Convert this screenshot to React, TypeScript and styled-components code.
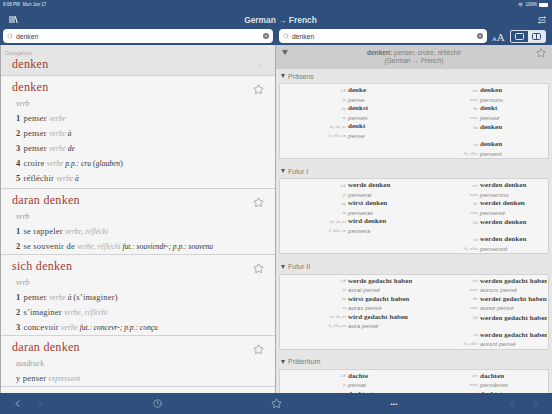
import React from 'react';
import styled, { createGlobalStyle } from 'styled-components';
import { ChevronLeft, ChevronRight, Clock, Search, Star, Wifi, X } from 'lucide-react';

const GlobalStyle = createGlobalStyle`
  html, body { margin: 0; padding: 0; background: #f5f5f5; }
  * { box-sizing: border-box; }
`;

const SERIF = '"Liberation Serif", "Times New Roman", serif';
const SANS = '"Liberation Sans", Arial, sans-serif';

const Page = styled.div`
  width: 552px;
  height: 414px;
  display: flex;
  flex-direction: column;
  overflow: hidden;
  font-family: ${SANS};
  will-change: opacity;
  opacity: 0.999;
`;

const Header = styled.header`
  height: 45px;
  flex: none;
  background: #2f507c;
  color: #fff;
  padding: 0 3px;
`;

const StatusBar = styled.div`
  height: 9px;
  padding: 0 1px 0 0;
  display: flex;
  justify-content: space-between;
  align-items: center;
  font-size: 4.5px;
  color: #e8edf3;
`;

const StatusLeft = styled.div`
  display: flex;
  gap: 3px;
`;

const StatusRight = styled.div`
  display: flex;
  align-items: center;
  gap: 2px;
`;

const Battery = styled.span`
  width: 9px;
  height: 4px;
  background: #fff;
  border-radius: 1px;
`;

const TitleRow = styled.div`
  height: 20px;
  padding: 1px 3px 0 6px;
  display: flex;
  align-items: center;
  justify-content: space-between;
`;

const Title = styled.div`
  font-size: 8.4px;
  font-weight: 700;
  color: #d8e0ea;
  margin-left: 5px;
`;

const SearchRow = styled.div`
  display: grid;
  grid-template-columns: 270px 1fr;
  gap: 6px;
`;

const SearchTools = styled.div`
  display: flex;
  align-items: center;
  gap: 5px;
`;

const SearchBox = styled.div<{ $width?: number }>`
  width: ${p => (p.$width ? `${p.$width}px` : '100%')};
  height: 14px;
  border-radius: 4px;
  background: #fff;
  padding: 0 4px 0 4px;
  display: flex;
  align-items: center;
  gap: 3px;
  font-size: 6.8px;
  color: #3c3c3c;
`;

const SearchText = styled.span`
  flex: 1;
`;

const ClearButton = styled.span`
  width: 6.5px;
  height: 6.5px;
  border-radius: 50%;
  background: #777;
  color: #fff;
  display: flex;
  align-items: center;
  justify-content: center;
`;

const FontSize = styled.div`
  font-family: ${SERIF};
  display: flex;
  align-items: baseline;
  color: #e4e9f0;
  margin-top: 1px;
`;

const FontLetter = styled.span<{ $big?: boolean }>`
  font-size: ${p => (p.$big ? 11 : 6.5)}px;
`;

const Segmented = styled.div`
  width: 36px;
  height: 13px;
  display: flex;
  border: 1px solid #d7e0ea;
  border-radius: 2px;
  overflow: hidden;
`;

const Segment = styled.span<{ $on?: boolean }>`
  flex: 1;
  display: flex;
  align-items: center;
  justify-content: center;
  background: ${p => (p.$on ? '#e4e9f0' : 'transparent')};
  color: ${p => (p.$on ? '#2f507c' : '#e4e9f0')};
`;

const Main = styled.main`
  flex: 1;
  min-height: 0;
  display: grid;
  grid-template-columns: 276px 276px;
  overflow: hidden;
`;

const LeftPane = styled.div`
  background: #f5f5f5;
  border-left: 1px solid #a9a9a9;
  border-right: 1px solid #a9a9a9;
  overflow: hidden;
`;

const ConjugationRow = styled.div`
  height: 31px;
  background: #e5e5e5;
  border-bottom: 1px solid #cfcfcf;
  padding: 6px 5px 0 4px;
  display: flex;
  justify-content: space-between;
`;

const ConjLabel = styled.div`
  font-size: 4.6px;
  color: #a9a9a9;
`;

const ConjWord = styled.div`
  font-family: ${SERIF};
  font-size: 12px;
  line-height: 14px;
  color: #a43a30;
  margin: 1px 0 0 7px;
  letter-spacing: 0.3px;
`;

const ConjChevron = styled.span`
  color: #b4b4b4;
  margin: 4.5px 6px 0 0;
`;

const Entry = styled.article<{ $height: number }>`
  height: ${p => p.$height}px;
  border-bottom: 1px solid #d2d2d2;
  padding: 4px 16px 0 11px;
  position: relative;
`;

const EntryStar = styled.span`
  position: absolute;
  top: 8px;
  right: 11px;
  color: #77777a;
  display: flex;
`;

const HeadWord = styled.h2`
  margin: 0;
  font-family: ${SERIF};
  font-weight: 400;
  font-size: 12px;
  line-height: 15px;
  color: #a43a30;
  letter-spacing: 0.3px;
`;

const PartOfSpeech = styled.div`
  font-family: ${SERIF};
  font-style: italic;
  font-size: 7.5px;
  line-height: 10px;
  color: #9a9a9a;
  margin: 3.5px 0 2px 4px;
`;

const Sense = styled.div`
  font-family: ${SERIF};
  font-size: 8.5px;
  letter-spacing: 0.2px;
  line-height: 15.2px;
  color: #444;
  margin-left: 4px;
  white-space: nowrap;
`;

const SenseNumber = styled.b`
  font-size: 8.5px;
  margin-right: 3px;
`;

const Gram = styled.i`
  font-size: 7.5px;
  letter-spacing: 0;
  color: #aaa;
`;

const Note = styled.i`
  font-size: 7.5px;
  letter-spacing: 0;
  color: #333;
`;

const RightPane = styled.div`
  background: #e6e6e6;
  overflow: hidden;
`;

const DetailHead = styled.div`
  height: 24px;
  background: #cdcdcd;
  position: relative;
  padding-top: 4px;
  text-align: center;
  font-size: 6.6px;
  line-height: 8.2px;
  color: #808080;
`;

const DetailWord = styled.b`
  color: #6e6e6e;
`;

const HeadToggle = styled.span`
  position: absolute;
  left: 5.5px;
  top: 5px;
  width: 0;
  height: 0;
  border-left: 3.5px solid transparent;
  border-right: 3.5px solid transparent;
  border-top: 5px solid #666;
`;

const HeadStar = styled.span`
  position: absolute;
  right: 6px;
  top: 3px;
  color: #666;
  display: flex;
`;

const Section = styled.section`
  height: 95.33px;
  padding: 0 3px;
`;

const SectionTitle = styled.div`
  height: 14px;
  padding-left: 2px;
  display: flex;
  align-items: center;
  gap: 3px;
  font-size: 7px;
  color: #7c7c7c;
`;

const SectionToggle = styled.span`
  width: 0;
  height: 0;
  border-left: 2.5px solid transparent;
  border-right: 2.5px solid transparent;
  border-top: 4px solid #555;
`;

const TableBox = styled.div`
  height: 76px;
  background: #f5f5f5;
  border: 1px solid #d2d2d2;
  border-radius: 1px;
  padding: 1.5px 1px 0 0;
  display: grid;
  grid-template-columns: 132px 1fr;
  overflow: hidden;
`;

const Column = styled.div`
  display: flex;
  flex-direction: column;
  min-width: 0;
  overflow: hidden;
`;

const Row = styled.div<{ $gap?: number }>`
  height: 9px;
  flex: none;
  margin-top: ${p => p.$gap || 0}px;
  display: grid;
  grid-template-columns: 66px 1fr;
  gap: 2px;
  align-items: center;
  white-space: nowrap;
`;

const Pronoun = styled.span`
  font-family: ${SERIF};
  font-style: italic;
  font-size: 4.4px;
  color: #a5a5a5;
  text-align: right;
`;

const GermanForm = styled.span`
  font-family: ${SERIF};
  font-weight: 700;
  font-size: 7px;
  color: #444;
  letter-spacing: 0.05px;
`;

const FrenchForm = styled.span`
  font-style: italic;
  font-size: 6.1px;
  color: #888;
`;

const Footer = styled.footer`
  height: 21px;
  flex: none;
  background: #2f507c;
  display: grid;
  grid-template-columns: 118px 78px 160px 76px 120px;
  align-items: center;
  color: #c5d0de;
`;

const FooterCell = styled.div<{ $align?: string; $inset?: string }>`
  display: flex;
  align-items: center;
  justify-content: ${p => p.$align || 'center'};
  padding: ${p => p.$inset || '0'};
  gap: 12px;
`;

const NavIcon = styled.span<{ $dim?: boolean }>`
  display: flex;
  color: ${p => (p.$dim ? '#5a779c' : '#d5dde8')};
`;

const Dots = styled.span`
  font-size: 6px;
  font-weight: 700;
  line-height: 8px;
  color: #e5eaf1;
  letter-spacing: 0.3px;
`;

const LibraryIcon = () => (
  <svg width="9" height="9" viewBox="0 0 18 18" fill="none" stroke="#fff" strokeWidth="2">
    <path d="M2 2v14M6 2v14M10 2v14M12.5 2.5l4 13.5" />
  </svg>
);

const SwapIcon = () => (
  <svg width="8" height="8" viewBox="0 0 16 16" fill="none" stroke="#e4e9f0" strokeWidth="1.5">
    <path d="M15 3H4a2.5 2.5 0 0 0 0 5h8a2.5 2.5 0 0 1 0 5H1M12 1l3 2-3 2M4 11l-3 2 3 2" />
  </svg>
);

type Part = { t: string; k?: 'gram' | 'note' };
type EntryData = { head: string; pos: string; height: number; senses: { n?: string; parts: Part[] }[] };

const entries: EntryData[] = [
  {
    head: 'denken', pos: 'verb', height: 113,
    senses: [
      { n: '1', parts: [{ t: 'penser ' }, { t: 'verbe', k: 'gram' }] },
      { n: '2', parts: [{ t: 'penser ' }, { t: 'verbe ', k: 'gram' }, { t: 'à', k: 'note' }] },
      { n: '3', parts: [{ t: 'penser ' }, { t: 'verbe ', k: 'gram' }, { t: 'de', k: 'note' }] },
      { n: '4', parts: [{ t: 'croire ' }, { t: 'verbe ', k: 'gram' }, { t: 'p.p.: cru ', k: 'note' }, { t: '(' }, { t: 'glauben', k: 'note' }, { t: ')' }] },
      { n: '5', parts: [{ t: 'réfléchir ' }, { t: 'verbe ', k: 'gram' }, { t: 'à', k: 'note' }] },
    ],
  },
  {
    head: 'daran denken', pos: 'verb', height: 66,
    senses: [
      { n: '1', parts: [{ t: 'se rappeler ' }, { t: 'verbe, réfléchi', k: 'gram' }] },
      { n: '2', parts: [{ t: 'se souvenir de ' }, { t: 'verbe, réfléchi ', k: 'gram' }, { t: 'fut.: souviendr-; p.p.: souvenu', k: 'note' }] },
    ],
  },
  {
    head: 'sich denken', pos: 'verb', height: 81,
    senses: [
      { n: '1', parts: [{ t: 'penser ' }, { t: 'verbe ', k: 'gram' }, { t: 'à ', k: 'note' }, { t: '(s’imaginer)' }] },
      { n: '2', parts: [{ t: 's’imaginer ' }, { t: 'verbe, réfléchi', k: 'gram' }] },
      { n: '3', parts: [{ t: 'concevoir ' }, { t: 'verbe ', k: 'gram' }, { t: 'fut.: concevr-; p.p.: conçu', k: 'note' }] },
    ],
  },
  {
    head: 'daran denken', pos: 'ausdruck', height: 51,
    senses: [{ parts: [{ t: 'y penser ' }, { t: 'expression', k: 'gram' }] }],
  },
];

const leftPronouns = ['ich', 'je', 'du', 'tu', 'er, sie, es', 'il, elle, on'];
const rightPronouns = ['wir', 'nous', 'ihr', 'vous', 'Sie', 'sie', 'ils, elles'];

const sections = [
  {
    title: 'Präsens',
    left: ['denke', 'pense', 'denkst', 'penses', 'denkt', 'pense'],
    right: ['denken', 'pensons', 'denkt', 'pensez', 'denken', 'denken', 'pensent'],
  },
  {
    title: 'Futur I',
    left: ['werde denken', 'penserai', 'wirst denken', 'penseras', 'wird denken', 'pensera'],
    right: ['werden denken', 'penserons', 'werdet denken', 'penserez', 'werden denken', 'werden denken', 'penseront'],
  },
  {
    title: 'Futur II',
    left: ['werde gedacht haben', 'aurai pensé', 'wirst gedacht haben', 'auras pensé', 'wird gedacht haben', 'aura pensé'],
    right: ['werden gedacht haben', 'aurons pensé', 'werdet gedacht haben', 'aurez pensé', 'werden gedacht haben', 'werden gedacht haben', 'auront pensé'],
  },
  {
    title: 'Präteritum',
    left: ['dachte', 'pensai', 'dachtest', 'pensas', 'dachte', 'pensa'],
    right: ['dachten', 'pensâmes', 'dachtet', 'pensâtes', 'dachten', 'dachten', 'pensèrent'],
  },
];

// the third person plural sits apart from the Sie row; German and French alternate except there
const rightKinds = ['de', 'fr', 'de', 'fr', 'de', 'de', 'fr'];

const Form = ({ kind, text }: { kind: string; text: string }) =>
  kind === 'de' ? <GermanForm>{text}</GermanForm> : <FrenchForm>{text}</FrenchForm>;

export default function App() {
  return (
    <Page>
      <GlobalStyle />
      <Header>
        <StatusBar>
          <StatusLeft>
            <span>8:08 PM</span>
            <span>Mon Jun 17</span>
          </StatusLeft>
          <StatusRight>
            <Wifi size={5} strokeWidth={3} />
            <span>100%</span>
            <Battery />
          </StatusRight>
        </StatusBar>
        <TitleRow>
          <LibraryIcon />
          <Title>German → French</Title>
          <SwapIcon />
        </TitleRow>
        <SearchRow>
          <SearchBox>
            <Search size={6} color="#999" />
            <SearchText>denken</SearchText>
            <ClearButton><X size={4} strokeWidth={3} /></ClearButton>
          </SearchBox>
          <SearchTools>
            <SearchBox $width={208}>
              <Search size={6} color="#999" />
              <SearchText>denken</SearchText>
              <ClearButton><X size={4} strokeWidth={3} /></ClearButton>
            </SearchBox>
            <FontSize>
              <FontLetter>A</FontLetter>
              <FontLetter $big>A</FontLetter>
            </FontSize>
            <Segmented>
              <Segment>
                <svg width="9" height="7" viewBox="0 0 9 7" fill="none" stroke="currentColor"><rect x="0.5" y="0.5" width="8" height="6" rx="1" /></svg>
              </Segment>
              <Segment $on>
                <svg width="9" height="7" viewBox="0 0 9 7" fill="none" stroke="currentColor"><rect x="0.5" y="0.5" width="8" height="6" rx="1" /><path d="M4.5 0.5v6" /></svg>
              </Segment>
            </Segmented>
          </SearchTools>
        </SearchRow>
      </Header>
      <Main>
        <LeftPane>
          <ConjugationRow>
            <div>
              <ConjLabel>Conjugations</ConjLabel>
              <ConjWord>denken</ConjWord>
            </div>
            <ConjChevron><ChevronRight size={9} strokeWidth={1.5} /></ConjChevron>
          </ConjugationRow>
          {entries.map((entry, i) => (
            <Entry key={i} $height={entry.height}>
              <HeadWord>{entry.head}</HeadWord>
              <EntryStar><Star size={11} strokeWidth={1.3} /></EntryStar>
              <PartOfSpeech>{entry.pos}</PartOfSpeech>
              {entry.senses.map((sense, j) => (
                <Sense key={j}>
                  {sense.n && <SenseNumber>{sense.n}</SenseNumber>}
                  {sense.parts.map((part, k) =>
                    part.k === 'gram' ? <Gram key={k}>{part.t}</Gram>
                      : part.k === 'note' ? <Note key={k}>{part.t}</Note>
                      : <span key={k}>{part.t}</span>
                  )}
                </Sense>
              ))}
            </Entry>
          ))}
        </LeftPane>
        <RightPane>
          <DetailHead>
            <HeadToggle />
            <DetailWord>denken:</DetailWord> penser, croire, réfléchir
            <br />
            (German → <i>French</i>)
            <HeadStar><Star size={10} strokeWidth={1.2} /></HeadStar>
          </DetailHead>
          {sections.map(section => (
            <Section key={section.title}>
              <SectionTitle>
                <SectionToggle />
                {section.title}
              </SectionTitle>
              <TableBox>
                <Column>
                  {section.left.map((form, i) => (
                    <Row key={i}>
                      <Pronoun>{leftPronouns[i]}</Pronoun>
                      <Form kind={i % 2 === 0 ? 'de' : 'fr'} text={form} />
                    </Row>
                  ))}
                </Column>
                <Column>
                  {section.right.map((form, i) => (
                    <Row key={i} $gap={i === 4 ? 1 : i === 5 ? 8 : 0}>
                      <Pronoun>{rightPronouns[i]}</Pronoun>
                      <Form kind={rightKinds[i]} text={form} />
                    </Row>
                  ))}
                </Column>
              </TableBox>
            </Section>
          ))}
        </RightPane>
      </Main>
      <Footer>
        <FooterCell $align="flex-start" $inset="0 0 0 12px">
          <NavIcon><ChevronLeft size={11} strokeWidth={1.6} /></NavIcon>
          <NavIcon $dim><ChevronRight size={11} strokeWidth={1.6} /></NavIcon>
        </FooterCell>
        <FooterCell><NavIcon><Clock size={9} strokeWidth={1.3} /></NavIcon></FooterCell>
        <FooterCell><NavIcon><Star size={11} strokeWidth={1.3} /></NavIcon></FooterCell>
        <FooterCell><Dots>•••</Dots></FooterCell>
        <FooterCell $align="flex-end" $inset="0 11px 0 0">
          <NavIcon $dim><ChevronLeft size={11} strokeWidth={1.6} /></NavIcon>
          <NavIcon $dim><ChevronRight size={11} strokeWidth={1.6} /></NavIcon>
        </FooterCell>
      </Footer>
    </Page>
  );
}
